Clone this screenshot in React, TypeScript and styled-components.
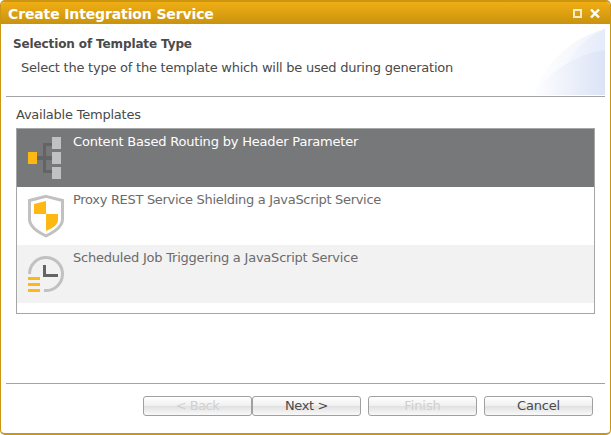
import React from "react";
import styled, { createGlobalStyle, css } from "styled-components";

const GlobalStyle = createGlobalStyle`
  * { box-sizing: border-box; }
  html, body { margin: 0; background: #fff; }
  body { font-family: "DejaVu Sans", Verdana, sans-serif; font-size: 13px; color: #4a4a4a; }
`;

const Dialog = styled.div`
  width: 611px;
  height: 435px;
  display: flex;
  flex-direction: column;
  border: solid #cc9512;
  border-width: 2px 1px;
  border-radius: 5px;
  background: #fff;
  overflow: hidden;
`;

const TitleBar = styled.header`
  height: 22px;
  flex: none;
  display: flex;
  align-items: center;
  justify-content: space-between;
  padding: 0 10px 0 7px;
  background: linear-gradient(#f0ae14, #c9930f);
`;

const Title = styled.h1`
  margin: 0;
  font-size: 14px;
  line-height: 22px;
  letter-spacing: -0.13px;
  color: #fff;
  white-space: nowrap;
  padding-top: 1px;
`;

const WindowButtons = styled.div`
  display: flex;
  gap: 8px;
  padding-top: 1px;
`;

const Banner = styled.section`
  height: 73px;
  flex: none;
  display: flex;
  justify-content: space-between;
  margin: 0 5px;
  border-bottom: 1px solid #a3a3a8;
`;

const BannerText = styled.div`
  padding: 11px 0 0 7px;
`;

const Heading = styled.h2`
  margin: 0;
  font-size: 12px;
  line-height: 18px;
  letter-spacing: -0.12px;
  white-space: nowrap;
`;

const Description = styled.p`
  margin: 6px 0 0 8px;
  font-size: 13px;
  line-height: 18px;
  letter-spacing: -0.235px;
  white-space: nowrap;
`;

const BannerArt = styled.svg`
  flex: none;
  margin-top: 4px;
`;

const Body = styled.main`
  flex: 1;
  margin: 0 5px;
  padding: 9px 10px 0;
  border-bottom: 1px solid #a3a3a3;
`;

const ListLabel = styled.div`
  height: 22px;
  line-height: 18px;
  letter-spacing: -0.23px;
`;

const List = styled.ul`
  list-style: none;
  margin: 0;
  padding: 0;
  width: 579px;
  height: 186px;
  border: 1px solid #a5a7a7;
`;

const Row = styled.li<{ $tone: "selected" | "plain" | "striped" }>`
  height: 58px;
  display: flex;
  gap: 5px;
  padding-left: 8px;
  color: #6b6b6b;
  ${({ $tone }) => $tone === "selected" && css`background: #777879; color: #fff;`}
  ${({ $tone }) => $tone === "striped" && css`background: #f2f2f2;`}
`;

const RowIcon = styled.svg`
  flex: none;
  display: block;
`;

const RowText = styled.span<{ $spacing: number }>`
  padding-top: 4px;
  line-height: 18px;
  letter-spacing: ${({ $spacing }) => $spacing}px;
  white-space: nowrap;
`;

const Footer = styled.footer`
  height: 49px;
  flex: none;
  display: flex;
  justify-content: flex-end;
  padding: 12px 17px 0 0;
`;

const Button = styled.button<{ $gap?: number; $spacing?: number }>`
  width: 109px;
  height: 20px;
  margin: 0 0 0 ${({ $gap = 0 }) => $gap}px;
  padding: 0 0 1px;
  border: 1px solid #a0a0a0;
  border-radius: 3px;
  background: linear-gradient(#fff 0%, #f0f0f0 48%, #e1e1e1 52%, #f9f9f9 100%);
  font: 13px/17px "DejaVu Sans", Verdana, sans-serif;
  letter-spacing: ${({ $spacing = -0.1 }) => $spacing}px;
  color: #4a4a4a;
  &:disabled { color: #d0d0d0; }
`;

const RoutingIcon = () => (
  <RowIcon width="43" height="58" viewBox="25 129 43 58" shapeRendering="crispEdges">
    <path d="M37 156h15v4H46v10h6v3h-9v-13h-6zM43 143h9v3h-6v10h-3z" fill="#646464" />
    <path d="M28 152h9v12h-9z" fill="#fdb813" />
    <path d="M52 137h9v12h-9zM52 152h9v12h-9zM52 167h9v12h-9z" fill="#c1c1c1" />
  </RowIcon>
);

const ShieldIcon = () => (
  <RowIcon width="43" height="58" viewBox="25 187 43 58">
    <path d="M46 196.4L62.5 200.5V219C62.5 227 54 232.2 46 235.8C38 232.2 29.5 227 29.5 219V200.5Z" fill="#fff" stroke="#c1c1c1" strokeWidth="3" />
    <path d="M46 201v13H34v-10zM46 214h12v6c0 5-6 8.500-12 11z" fill="#fdb813" />
  </RowIcon>
);

const ClockIcon = () => (
  <RowIcon width="43" height="58" viewBox="25 245 43 58">
    <path d="M29.5 274A16.500 16.500 0 1 1 44 290.400" fill="none" stroke="#c1c1c1" strokeWidth="3" />
    <path d="M43 265h3v9h12v3H43z" fill="#646464" />
    <path d="M28 277h12v3H28zM28 283h12v3H28zM28 289h12v3H28z" fill="#fdb813" />
  </RowIcon>
);

const templates = [
  { name: "Content Based Routing by Header Parameter", icon: RoutingIcon, tone: "selected" as const, spacing: -0.19 },
  { name: "Proxy REST Service Shielding a JavaScript Service", icon: ShieldIcon, tone: "plain" as const, spacing: -0.31 },
  { name: "Scheduled Job Triggering a JavaScript Service", icon: ClockIcon, tone: "striped" as const, spacing: -0.22 },
];

export default function App() {
  return (
    <>
      <GlobalStyle />
      <Dialog>
        <TitleBar>
          <Title>Create Integration Service</Title>
          <WindowButtons>
            <svg width="9" height="9" viewBox="0 0 9 9">
              <path d="M1 1h7v7H1z" fill="none" stroke="#fdeec0" strokeWidth="2" />
            </svg>
            <svg width="10" height="9" viewBox="0 0 10 9">
              <path d="M1 .5l8 8M9 .5l-8 8" stroke="#fff" strokeWidth="2.400" />
            </svg>
          </WindowButtons>
        </TitleBar>
        <Banner>
          <BannerText>
            <Heading>Selection of Template Type</Heading>
            <Description>Select the type of the template which will be used during generation</Description>
          </BannerText>
          <BannerArt width="75" height="67" viewBox="530 28 75 67">
            <defs>
              <linearGradient id="outer" gradientUnits="userSpaceOnUse" x1="532" x2="605" y1="0" y2="0">
                <stop offset="0" stopColor="#fff" />
                <stop offset="1" stopColor="#eef2fb" />
              </linearGradient>
              <linearGradient id="fold" gradientUnits="userSpaceOnUse" x1="560" x2="605" y1="0" y2="0">
                <stop offset="0" stopColor="#f5f8fd" />
                <stop offset="1" stopColor="#e5ebf9" />
              </linearGradient>
              <linearGradient id="inner" gradientUnits="userSpaceOnUse" x1="532" x2="605" y1="0" y2="0">
                <stop offset="0" stopColor="#fff" />
                <stop offset="1" stopColor="#dbe3f6" />
              </linearGradient>
            </defs>
            <path d="M532 95C545 64 570 38 605 29V95Z" fill="url(#outer)" />
            <path d="M566 66C575 48 588 36 605 29V66Z" fill="url(#fold)" />
            <path d="M532 95C550 71 576 54 605 50V95Z" fill="url(#inner)" />
          </BannerArt>
        </Banner>
        <Body>
          <ListLabel>Available Templates</ListLabel>
          <List>
            {templates.map(({ name, icon: Icon, tone, spacing }) => (
              <Row key={name} $tone={tone}>
                <Icon />
                <RowText $spacing={spacing}>{name}</RowText>
              </Row>
            ))}
          </List>
        </Body>
        <Footer>
          <Button disabled $spacing={-0.5}>&lt; Back</Button>
          <Button $spacing={-0.35}>Next &gt;</Button>
          <Button disabled $gap={7}>Finish</Button>
          <Button $gap={7} $spacing={-0.2}>Cancel</Button>
        </Footer>
      </Dialog>
    </>
  );
}
